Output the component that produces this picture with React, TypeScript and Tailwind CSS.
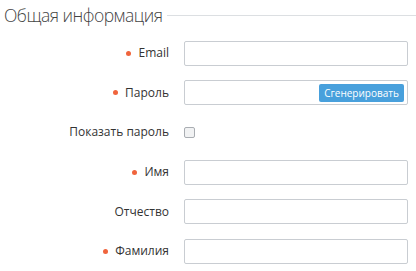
import React from 'react';

const Dot = () => <span className="mr-[7px] inline-block h-[5px] w-[5px] rounded-full bg-[#f0643c]" />;

interface RowProps {
  label: string;
  required?: boolean;
  children: React.ReactNode;
}

const Row: React.FC<RowProps> = ({ label, required, children }) => (
  <div className="flex h-[39.6px] items-center">
    <div className="flex w-[169px] shrink-0 items-center justify-end text-[12px] text-[#333]">
      {required && <Dot />}
      <span>{label}</span>
    </div>
    <div className="ml-[15px] flex-1 pr-[8px]">{children}</div>
  </div>
);

const Field = ({ children }: { children?: React.ReactNode }) => (
  <div className="flex h-[25px] w-[224px] items-center justify-end rounded-[2px] border border-[#c9cdd2] bg-white pr-[3px]">
    {children}
  </div>
);

export default function App() {
  return (
    <div className="h-[271px] w-[416px] overflow-hidden bg-white font-['Open_Sans',sans-serif]">
      <div className="flex items-center pl-[4px] pt-[3px]">
        <h2 className="text-[17.5px] leading-[24px] font-light tracking-[-0.5px] text-[#444]">Общая информация</h2>
        <div className="ml-[5px] h-px flex-1 bg-[#dcdfe2]" />
      </div>
      <div className="pt-[6.5px]">
        <Row label="Email" required>
          <Field />
        </Row>
        <Row label="Пароль" required>
          <Field>
            <button className="h-[18px] w-[85px] rounded-[2px] bg-[#48a0dc] text-[10px] leading-[18px] text-white">
              Сгенерировать
            </button>
          </Field>
        </Row>
        <Row label="Показать пароль">
          <span className="block h-[11px] w-[11px] rounded-[2px] border border-[#a9adb2] bg-[#f1f2f3]" />
        </Row>
        <Row label="Имя" required>
          <Field />
        </Row>
        <Row label="Отчество">
          <Field />
        </Row>
        <Row label="Фамилия" required>
          <Field />
        </Row>
      </div>
    </div>
  );
}
